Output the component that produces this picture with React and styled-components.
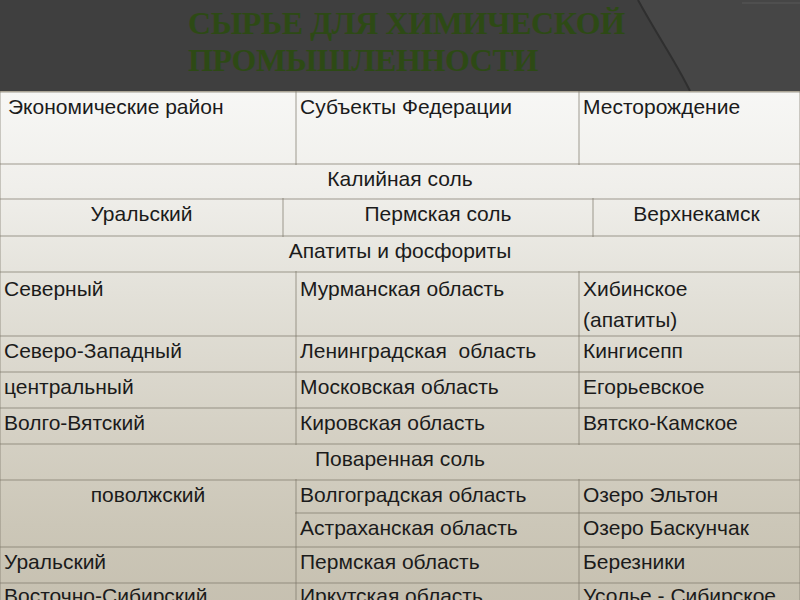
import React from "react";
import styled, { createGlobalStyle } from "styled-components";

const GlobalStyle = createGlobalStyle`
    html, body {
        margin: 0;
        padding: 0;
        width: 800px;
        height: 600px;
        overflow: hidden;
        background: #3f3f3f;
    }
`;

const rows = [
    { h: 61, tall: true, cells: ["Северный", "Мурманская область", "Хибинское\n(апатиты)"] },
    { h: 36, cells: ["Северо-Западный", "Ленинградская\u00a0 область", "Кингисепп"] },
    { h: 36, cells: ["центральный", "Московская область", "Егорьевское"] },
    { h: 36, cells: ["Волго-Вятский", "Кировская область", "Вятско-Камское"] },
];

export default function App() {
    return (
        <Page>
            <GlobalStyle />
            <Header>
                <Decor viewBox="0 0 800 91" preserveAspectRatio="none">
                    <path d="M638 0 C 657 35, 676 62, 690 91 L 800 91 L 800 0 Z" fill="#464646" />
                    <path d="M638 0 C 657 35, 676 62, 690 91" stroke="#2f2f2f" strokeWidth="2" fill="none" />
                    <path d="M742 3 L 800 3" stroke="#585858" strokeWidth="1" />
                </Decor>
                <Title>
                    СЫРЬЕ ДЛЯ ХИМИЧЕСКОЙ
                    <br />
                    ПРОМЫШЛЕННОСТИ
                </Title>
            </Header>

            <Table>
                <colgroup>
                    <col style={{ width: 283 }} />
                    <col style={{ width: 13 }} />
                    <col style={{ width: 283 }} />
                    <col style={{ width: 14 }} />
                    <col style={{ width: 207 }} />
                </colgroup>
                <tbody>
                    <Row $h={72}>
                        <Cell colSpan={2} $indent>Экономические район</Cell>
                        <Cell>Субъекты Федерации</Cell>
                        <Cell colSpan={2}>Месторождение</Cell>
                    </Row>
                    <Row $h={35}>
                        <Cell colSpan={5} $center>Калийная соль</Cell>
                    </Row>
                    <Row $h={37}>
                        <Cell $center>Уральский</Cell>
                        <Cell colSpan={3} $center>Пермская соль</Cell>
                        <Cell $center>Верхнекамск</Cell>
                    </Row>
                    <Row $h={36}>
                        <Cell colSpan={5} $center>Апатиты и фосфориты</Cell>
                    </Row>
                    {rows.map((r, i) => (
                        <Row key={i} $h={r.h}>
                            <Cell colSpan={2} $tall={r.tall}>{r.cells[0]}</Cell>
                            <Cell $tall={r.tall}>{r.cells[1]}</Cell>
                            <Cell colSpan={2} $tall={r.tall}>{r.cells[2]}</Cell>
                        </Row>
                    ))}
                    <Row $h={36}>
                        <Cell colSpan={5} $center>Поваренная соль</Cell>
                    </Row>
                    <Row $h={33}>
                        <Cell colSpan={2} rowSpan={2} $center>поволжский</Cell>
                        <Cell>Волгоградская область</Cell>
                        <Cell colSpan={2}>Озеро Эльтон</Cell>
                    </Row>
                    <Row $h={34}>
                        <Cell>Астраханская область</Cell>
                        <Cell colSpan={2}>Озеро Баскунчак</Cell>
                    </Row>
                    <Row $h={36}>
                        <Cell colSpan={2}>Уральский</Cell>
                        <Cell>Пермская область</Cell>
                        <Cell colSpan={2}>Березники</Cell>
                    </Row>
                    <Row $h={36}>
                        <Cell colSpan={2} $last>Восточно-Сибирский</Cell>
                        <Cell $last>Иркутская область</Cell>
                        <Cell colSpan={2} $last>Усолье - Сибирское</Cell>
                    </Row>
                </tbody>
            </Table>
        </Page>
    );
}

const Page = styled.div`
    width: 800px;
    height: 600px;
    overflow: hidden;
    display: flex;
    flex-direction: column;
    background: #3f3f3f;
`;

const Header = styled.div`
    position: relative;
    height: 91px;
    flex-shrink: 0;
    background: #3f3f3f;
`;

const Decor = styled.svg`
    position: absolute;
    inset: 0;
    width: 100%;
    height: 100%;
`;

const Title = styled.h1`
    position: relative;
    margin: 0;
    padding: 5px 0 0 188px;
    font-family: "Liberation Serif", "Times New Roman", serif;
    font-weight: bold;
    font-size: 32px;
    line-height: 37px;
    color: #2d4a15;
    letter-spacing: -0.4px;
`;

const Table = styled.table`
    width: 800px;
    table-layout: fixed;
    border-collapse: collapse;
    margin-left: -1px;
    background: linear-gradient(
        to bottom,
        #f7f7f5 0%,
        #f0efeb 18%,
        #e3e1d9 38%,
        #d6d2c6 62%,
        #ccc7b8 82%,
        #c5bfaf 100%
    );
    font-family: "Liberation Sans", Arial, sans-serif;
    font-size: 21px;
    color: #1b1b1b;
`;

const Row = styled.tr`
    height: ${props => props.$h}px;
`;

const Cell = styled.td`
    border: 2px solid rgba(125, 120, 105, 0.36);
    padding: 0 3px 0 ${props => (props.$indent ? "7px" : "3px")};
    vertical-align: top;
    text-align: ${props => (props.$center ? "center" : "left")};
    line-height: ${props => (props.$tall ? "31px" : props.$last ? "24px" : "28px")};
    white-space: pre-line;
    overflow: hidden;
`;
